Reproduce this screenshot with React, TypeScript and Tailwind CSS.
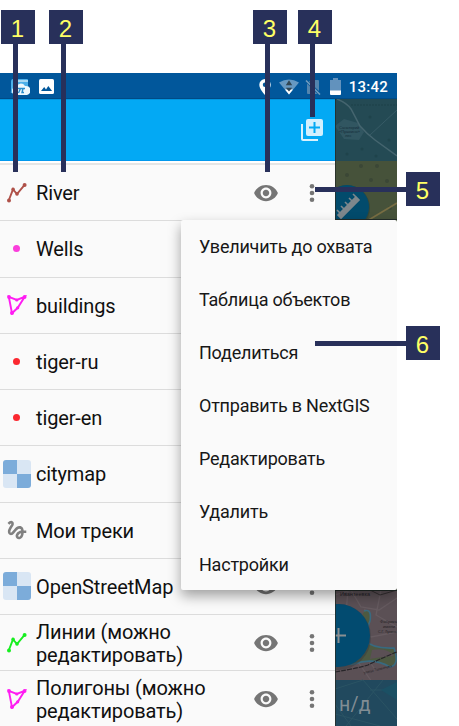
import type { ReactNode } from 'react';

const LineIcon = ({ color }: { color: string }) => (
  <svg width="20" height="20" viewBox="0 0 20 20" fill="none" stroke={color} strokeWidth="1.9">
    <path d="M1.7 17.5 6 6.3 10 11 17.8 1.6" />
    <g fill={color} stroke="none">
      <circle cx="2" cy="17.4" r="2" />
      <circle cx="6.1" cy="6.4" r="1.8" />
      <circle cx="10" cy="10.9" r="1.8" />
      <circle cx="17.6" cy="2" r="2" />
    </g>
  </svg>
);

const PolygonIcon = () => (
  <svg width="20" height="20" viewBox="0 0 20 20" fill="none" stroke="#ff1cf2" strokeWidth="1.9">
    <path d="M1.8 1.8 9.8 5 17.7 1.8 10.7 12.8 5 18.3Z" />
    <g fill="#ff1cf2" stroke="none">
      <circle cx="2" cy="2" r="1.9" />
      <circle cx="9.8" cy="5" r="1.6" />
      <circle cx="17.6" cy="2" r="1.9" />
      <circle cx="10.7" cy="12.8" r="1.6" />
      <circle cx="5" cy="18" r="2" />
    </g>
  </svg>
);

const TrackIcon = () => (
  <svg width="20" height="20" viewBox="2.3 2.3 19.4 19.4" fill="#808080">
    <path d="M4.59 6.89c.7-.71 1.4-1.35 1.71-1.22.5.2 0 1.03-.3 1.52-.25.42-2.86 3.89-2.86 6.31 0 1.28.48 2.34 1.34 2.98.75.56 1.74.73 2.64.46 1.07-.31 1.95-1.4 3.06-2.77 1.21-1.49 2.83-3.44 4.08-3.44 1.63 0 1.65 1.01 1.76 1.79-3.78.64-5.38 3.67-5.38 5.37s1.44 3.09 3.21 3.09c1.63 0 4.29-1.33 4.69-6.1H21v-2.5h-2.47c-.15-1.65-1.09-4.2-4.03-4.2-2.25 0-4.18 1.91-4.94 2.84-.58.73-2.06 2.48-2.29 2.72-.25.3-.68.84-1.11.84-.45 0-.72-.83-.36-1.92.35-1.09 1.4-2.86 1.85-3.52.78-1.14 1.3-1.92 1.3-3.28C8.95 3.69 7.31 3 6.44 3 5.12 3 3.97 4 3.72 4.25c-.36.36-.66.66-.88.93l1.75 1.71zm9.29 11.66c-.31 0-.74-.26-.74-.72 0-.6.73-2.2 2.87-2.76-.3 2.69-1.43 3.48-2.13 3.48z" />
  </svg>
);

const TilesIcon = () => (
  <span className="grid h-7 w-7 grid-cols-2 overflow-hidden rounded-[3px]">
    <span className="bg-[#7cacda]" />
    <span className="bg-[#d9e6f4]" />
    <span className="bg-[#d9e6f4]" />
    <span className="bg-[#7cacda]" />
  </span>
);

const EyeIcon = () => (
  <svg width="26" height="26" viewBox="0 0 24 24" fill="#757575">
    <path d="M12 4.5C7 4.5 2.73 7.61 1 12c1.73 4.39 6 7.5 11 7.5s9.27-3.11 11-7.5c-1.73-4.39-6-7.5-11-7.5zM12 17c-2.76 0-5-2.24-5-5s2.24-5 5-5 5 2.24 5 5-2.24 5-5 5zm0-8c-1.66 0-3 1.34-3 3s1.34 3 3 3 3-1.34 3-3-1.34-3-3-3z" />
  </svg>
);

const DotsIcon = () => (
  <svg width="6" height="20" viewBox="0 0 6 20" fill="#757575">
    <circle cx="3" cy="3.3" r="2.3" />
    <circle cx="3" cy="10" r="2.3" />
    <circle cx="3" cy="16.7" r="2.3" />
  </svg>
);

const Dot = ({ pink }: { pink?: boolean }) => (
  <span className={pink ? 'h-[7px] w-[7px] rounded-full bg-[#fa3edb]' : 'h-[7px] w-[7px] rounded-full bg-[#fb2830]'} />
);

const layers: { name: string; icon: ReactNode }[] = [
  { name: 'River', icon: <LineIcon color="#af5149" /> },
  { name: 'Wells', icon: <Dot pink /> },
  { name: 'buildings', icon: <PolygonIcon /> },
  { name: 'tiger-ru', icon: <Dot /> },
  { name: 'tiger-en', icon: <Dot /> },
  { name: 'citymap', icon: <TilesIcon /> },
  { name: 'Мои треки', icon: <TrackIcon /> },
  { name: 'OpenStreetMap', icon: <TilesIcon /> },
  { name: 'Линии (можно редактировать)', icon: <LineIcon color="#18ee20" /> },
  { name: 'Полигоны (можно редактировать)', icon: <PolygonIcon /> },
];

const menu = ['Увеличить до охвата', 'Таблица объектов', 'Поделиться', 'Отправить в NextGIS', 'Редактировать', 'Удалить', 'Настройки'];

function StatusBar() {
  return (
    <div className="flex h-[26px] shrink-0 items-center border-b border-[#004b86] bg-[#01579b] pt-[2px] pr-[9px] pl-[10px]">
      <svg width="20" height="18" viewBox="0 0 20 18">
        <path d="M3 1h14q1 0 1 1v13H2Q0 15 1 13V4Q1 1 3 1" fill="#4dafe9" />
        <path d="M6 2h12v2H6z" fill="#a9d8f2" />
        <path d="M6 17a4 4 0 0 1 0-8 5 5 0 0 1 9-1 4.5 4.5 0 0 1 2 9z" fill="#eef7fc" />
        <path d="M7 11.500q1-1.500 2-1h6M10.500 10.500l-2 4.500M13 10.500l-1 4h2" fill="none" stroke="#298dcc" strokeWidth="1.4" />
      </svg>
      <svg className="ml-[9px]" width="15" height="15" viewBox="0 0 15 15">
        <rect width="15" height="15" rx="1.5" fill="#fff" />
        <path d="m2 12 3.2-4L7 10.4 9.3 7l3.8 5z" fill="#01579b" />
      </svg>
      <div className="ml-auto flex items-center">
        <svg width="12" height="16" viewBox="0 0 12 16">
          <path fillRule="evenodd" d="M6 0a5.7 5.7 0 0 0-5.7 5.7C.3 10 6 16 6 16s5.7-6 5.7-10.3A5.7 5.7 0 0 0 6 0m0 3.6a2.2 2.2 0 1 1 0 4.4 2.2 2.2 0 0 1 0-4.4" fill="#fff" />
        </svg>
        <svg className="ml-[8px]" width="20" height="16" viewBox="0 0 20 16">
          <path d="M0 3.5Q10-2.7 20 3.5L10 15.5z" fill="#6699c2" />
          <path d="M6 10.5h8l-4 5z" fill="#fff" />
          <path d="m6.800 6.300 3.200-5 3.200 5zM6.800 8.700h6.400L10 12.500z" fill="#314652" />
        </svg>
        <svg className="ml-[6px]" width="16" height="16" viewBox="0 0 16 16">
          <path d="M5.5 1H13a1 1 0 0 1 1 1v10L4 2.800zM2 4.500 12.500 15H3a1 1 0 0 1-1-1z" fill="#5385ae" />
          <path d="m1 1.500 14 14" stroke="#729dbe" strokeWidth="1.6" />
        </svg>
        <svg className="ml-[9px]" width="11" height="17" viewBox="0 0 11 17">
          <path d="M3 0h5v2h3v11H0V2h3z" fill="#6292bd" />
          <path d="M0 12.5h11V16q0 1-1 1H1q-1 0-1-1z" fill="#fff" />
        </svg>
        <span className="ml-[8px] pt-px text-[15px] leading-none font-medium tracking-[0.25px] text-white">13:42</span>
      </div>
    </div>
  );
}

function MapStrip() {
  return (
    <svg className="block h-full w-full" viewBox="335 99 62 627">
      <path fill="#46523a" d="M335 99h62v627h-62z" />
      <path fill="#244a54" d="M335 99h62v62h-62z" />
      <path d="m335 126 9-7 14 4 6 9-5 8-15-1z" fill="#315661" />
      <g fontFamily="Liberation Sans, sans-serif" fontSize="4" fill="#152e3b">
        <text x="339" y="129">Санаторий</text>
        <text x="339" y="133">«Пушкино»</text>
        <text x="345" y="137">лес</text>
      </g>
      <path d="M337 99q10 4 14 10l9 17q7 8 15 14l22 16" fill="none" stroke="#45656f" strokeWidth="1.5" />
      <path d="m397 110-27 25" fill="none" stroke="#365b66" />
      <path d="M351 105h46" stroke="#1d4049" strokeDasharray="2 1" fill="none" />
      <g fill="#1f434b">
        <circle cx="347" cy="154" r="1.5" /><circle cx="362" cy="149" r="1.5" /><circle cx="376" cy="156" r="1.5" /><circle cx="389" cy="140" r="1.5" /><circle cx="370" cy="117" r="1.5" />
      </g>
      <g fill="#3b4736">
        <circle cx="347" cy="175" r="2" /><circle cx="361" cy="166" r="2" /><circle cx="377" cy="166" r="2" /><circle cx="387" cy="181" r="2" /><circle cx="371" cy="180" r="2" /><circle cx="390" cy="208" r="2" />
      </g>
      <path d="m367 221 30-18" stroke="#786e43" strokeWidth="1.6" />
      <circle cx="347" cy="208" r="23" fill="#253d35" opacity=".5" />
      <circle cx="347" cy="207" r="22" fill="#024b6c" />
      <path d="m338 215 18-18 3 3-18 18zM340 213l-3-3M344 209l-3-3M348 205l-3-3M352 201l-3-3M356 197l-3-3" fill="#7e878c" stroke="#7e878c" strokeWidth="1.6" />
      <path fill="#5b5055" d="M335 590h62v90h-62z" />
      <path d="m335 595 16-5 10 17 18 3 18-12M348 590l-2 23 25 24 26-5M365 609l-8 34 19 28M381 590l-5 25 21 12M342 639l30 43" fill="none" stroke="#665b60" strokeWidth="1.3" />
      <path d="M364 611q8-3 6 10l-7 18q9 10 31 9 6 17-4 19-17-10-36-3-8 2-8-6" fill="#4d5941" stroke="#386a80" strokeWidth="1.6" />
      <path d="M372 650q15-3 22 6-14 1-24 3z" fill="#5b5055" />
      <path d="M335 672q24-4 33-7 18-9 29-13" fill="none" stroke="#272529" strokeWidth="1.2" strokeDasharray="5 1" />
      <path d="m370 590 10 5 17-5" fill="none" stroke="#342f31" />
      <g fontFamily="Liberation Sans, sans-serif" fontSize="5.5" fill="#242126">
        <text x="340" y="596">Ивантеевка</text>
        <g fontSize="4.2">
          <text x="380" y="623">Фабрика</text>
          <text x="383" y="628">имени</text>
          <text x="378" y="633" fontSize="3.5">С.Г. Лукина</text>
          <text x="364" y="674" fontSize="3.6" transform="rotate(-14 364 674)">улица Толмачева</text>
        </g>
      </g>
      <circle cx="338" cy="637" r="33" fill="#373c40" opacity=".5" />
      <circle cx="338.5" cy="635.5" r="31.5" fill="#024b70" />
      <path d="M331 635.500h15M338.500 628v15" stroke="#8a8f91" strokeWidth="2" />
      <path fill="#21495e" d="M335 680h62v46h-62z" />
      <path d="m335 689 28-9 34 39M346 726l37-46M335 714l45 12M370 690h27M335 704l16 22" stroke="#2b5464" fill="none" />
      <path d="m381 690 16-8v18z" fill="#1b5064" />
      <path d="M335 590.500h62M335 219.500h62" stroke="#222c29" />
      <text x="339" y="711" fontFamily="Roboto, sans-serif" fontSize="19.500" letterSpacing=".2" fill="#818d94">н/д</text>
      <path d="M335.500 99v627" stroke="#242c28" opacity=".8" />
    </svg>
  );
}

function Callout({ n, box, line }: { n: number; box: string; line: string }) {
  return (
    <>
      <span className={`absolute bg-[#28305a] ${line}`} />
      <span className={`absolute flex h-[34px] w-[34px] items-center justify-center bg-[#28305a] pr-px pt-[3px] font-['Liberation_Sans',Arial,sans-serif] text-2xl leading-none text-[#ffff65] ${box}`}>
        {n}
      </span>
    </>
  );
}

export default function App() {
  return (
    <main className="relative h-[726px] w-[459px] overflow-hidden bg-white pt-[73px] font-[Roboto,'Noto_Sans',sans-serif]">
      <div className="flex h-[653px] w-[397px] flex-col">
        <StatusBar />
        <div className="flex min-h-0 flex-1">
          <aside className="flex w-[335px] shrink-0 flex-col overflow-hidden bg-[#fafafa]">
            <div className="flex h-[62px] shrink-0 items-center justify-end border-t border-b border-t-[#0295df] border-b-[#0298ed] bg-[#03a9f4] pr-[11px]">
              <svg width="24" height="24" viewBox="0 0 24 24" fill="none">
                <path d="M2 6v15q0 1 1 1h15" stroke="#d9f2fd" strokeWidth="2" />
                <rect x="6" y="1" width="17" height="17" rx="2" fill="#d3f0fe" />
                <path d="M14.500 4v11M9 9.500h11" stroke="#03a9f4" strokeWidth="2" />
              </svg>
            </div>
            <div className="h-[4px] shrink-0 border-b-2 border-[#e5e5e5] bg-white" />
            {layers.map(({ name, icon }) => (
              <div key={name} className="flex h-[56.25px] shrink-0 items-center border-b border-[#dcdcdc]">
                <div className="ml-[2px] flex w-[29px] shrink-0 items-center justify-center">{icon}</div>
                <div className="ml-[5px] w-[190px] pt-[2px] text-[20px] leading-[23px] tracking-[-0.13px] text-[#101010]">{name}</div>
                <div className="ml-auto flex items-center pr-[20px]">
                  <EyeIcon />
                  <span className="ml-[30px]"><DotsIcon /></span>
                </div>
              </div>
            ))}
          </aside>
          <div className="w-[62px]"><MapStrip /></div>
        </div>
      </div>
      <div className="absolute top-[220px] left-[181px] h-[370px] w-[216px] [clip-path:inset(-12px_0_-24px_-20px)]">
        <nav className="flex h-full flex-col rounded-[2px] bg-[#fafafa] shadow-[0_6px_13px_rgba(0,0,0,0.36)]">
          {menu.map((item) => (
            <div key={item} className="flex h-[53px] shrink-0 items-center pl-[18px] text-[18px] leading-none tracking-[-0.22px] whitespace-nowrap text-[#171717]">{item}</div>
          ))}
        </nav>
      </div>
      <Callout n={1} box="left-[1px] top-[10px]" line="left-[13px] top-[44px] h-[128px] w-[5px]" />
      <Callout n={2} box="left-[49px] top-[10px]" line="left-[61px] top-[44px] h-[128px] w-[5px]" />
      <Callout n={3} box="left-[253px] top-[10px]" line="left-[265px] top-[44px] h-[128px] w-[5px]" />
      <Callout n={4} box="left-[298px] top-[10px]" line="left-[310px] top-[44px] h-[73px] w-[5px]" />
      <Callout n={5} box="left-[406px] top-[172px]" line="left-[315px] top-[187px] h-[5px] w-[91px]" />
      <Callout n={6} box="left-[406px] top-[326px]" line="left-[315px] top-[341px] h-[5px] w-[91px]" />
    </main>
  );
}
